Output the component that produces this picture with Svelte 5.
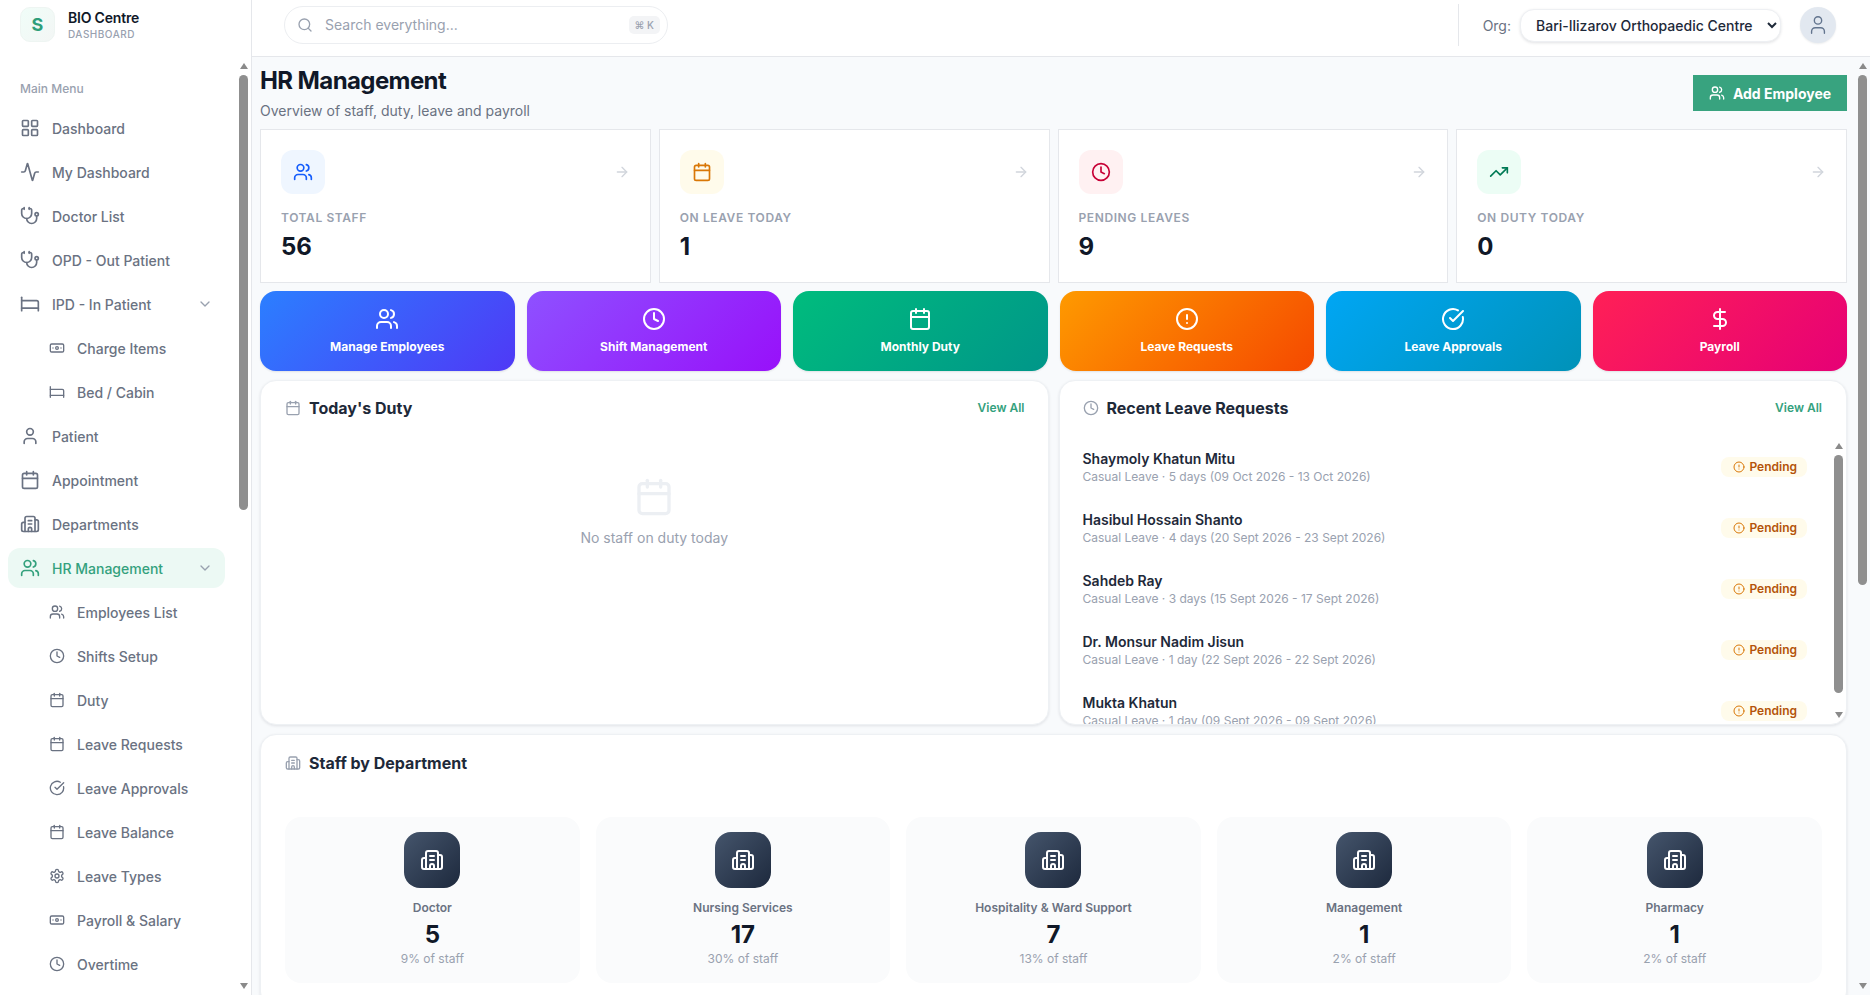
<script>
  const icons = {
    grid: '<rect x="3" y="3" width="7" height="7" rx="1"/><rect x="14" y="3" width="7" height="7" rx="1"/><rect x="14" y="14" width="7" height="7" rx="1"/><rect x="3" y="14" width="7" height="7" rx="1"/>',
    activity: '<path d="M22 12h-2.48a2 2 0 0 0-1.93 1.46l-2.35 8.36a.25.25 0 0 1-.48 0L9.24 2.18a.25.25 0 0 0-.48 0l-2.35 8.36A2 2 0 0 1 4.49 12H2"/>',
    stethoscope: '<path d="M11 2v2"/><path d="M5 2v2"/><path d="M5 3H4a2 2 0 0 0-2 2v4a6 6 0 0 0 12 0V5a2 2 0 0 0-2-2h-1"/><path d="M8 15a6 6 0 0 0 12 0v-3"/><circle cx="20" cy="10" r="2"/>',
    bed: '<path d="M2 4v16"/><path d="M2 8h18a2 2 0 0 1 2 2v10"/><path d="M2 17h20"/>',
    banknote: '<rect x="2" y="6" width="20" height="12" rx="2"/><circle cx="12" cy="12" r="2"/><path d="M6 12h.01M18 12h.01"/>',
    user: '<path d="M19 21v-2a4 4 0 0 0-4-4H9a4 4 0 0 0-4 4v2"/><circle cx="12" cy="7" r="4"/>',
    calendar: '<path d="M8 2v4"/><path d="M16 2v4"/><rect x="3" y="4" width="18" height="18" rx="2"/><path d="M3 10h18"/>',
    building: '<path d="M10 12h4"/><path d="M10 8h4"/><path d="M14 21v-3a2 2 0 0 0-4 0v3"/><path d="M6 10H4a2 2 0 0 0-2 2v7a2 2 0 0 0 2 2h16a2 2 0 0 0 2-2V9a2 2 0 0 0-2-2h-2"/><path d="M6 21V5a2 2 0 0 1 2-2h8a2 2 0 0 1 2 2v16"/>',
    users: '<path d="M16 21v-2a4 4 0 0 0-4-4H6a4 4 0 0 0-4 4v2"/><circle cx="9" cy="7" r="4"/><path d="M22 21v-2a4 4 0 0 0-3-3.87"/><path d="M16 3.13a4 4 0 0 1 0 7.75"/>',
    clock: '<circle cx="12" cy="12" r="10"/><path d="M12 6v6l4 2"/>',
    check: '<path d="M21.801 10A10 10 0 1 1 17 3.335"/><path d="m9 11 3 3L22 4"/>',
    settings: '<path d="M12.22 2h-.44a2 2 0 0 0-2 2v.18a2 2 0 0 1-1 1.73l-.43.25a2 2 0 0 1-2 0l-.15-.08a2 2 0 0 0-2.73.73l-.22.38a2 2 0 0 0 .73 2.73l.15.1a2 2 0 0 1 1 1.72v.51a2 2 0 0 1-1 1.74l-.15.09a2 2 0 0 0-.73 2.73l.22.38a2 2 0 0 0 2.73.73l.15-.08a2 2 0 0 1 2 0l.43.25a2 2 0 0 1 1 1.73V20a2 2 0 0 0 2 2h.44a2 2 0 0 0 2-2v-.18a2 2 0 0 1 1-1.73l.43-.25a2 2 0 0 1 2 0l.15.08a2 2 0 0 0 2.73-.73l.22-.39a2 2 0 0 0-.73-2.73l-.15-.08a2 2 0 0 1-1-1.74v-.5a2 2 0 0 1 1-1.74l.15-.09a2 2 0 0 0 .73-2.73l-.22-.38a2 2 0 0 0-2.73-.73l-.15.08a2 2 0 0 1-2 0l-.43-.25a2 2 0 0 1-1-1.73V4a2 2 0 0 0-2-2z"/><circle cx="12" cy="12" r="3"/>',
    search: '<path d="m21 21-4.34-4.34"/><circle cx="11" cy="11" r="8"/>',
    arrow: '<path d="M5 12h14"/><path d="m12 5 7 7-7 7"/>',
    trending: '<path d="M16 7h6v6"/><path d="m22 7-8.5 8.5-5-5L2 17"/>',
    alert: '<circle cx="12" cy="12" r="10"/><path d="M12 8v4"/><path d="M12 16h.01"/>',
    dollar: '<path d="M12 2v20"/><path d="M17 5H9.5a3.5 3.5 0 0 0 0 7h5a3.5 3.5 0 0 1 0 7H6"/>',
    chevron: '<path d="m6 9 6 6 6-6"/>'
  };

  const menu = [
    { label: 'Dashboard', icon: 'grid' },
    { label: 'My Dashboard', icon: 'activity' },
    { label: 'Doctor List', icon: 'stethoscope' },
    { label: 'OPD - Out Patient', icon: 'stethoscope' },
    { label: 'IPD - In Patient', icon: 'bed', open: true },
    { label: 'Charge Items', icon: 'banknote', sub: true },
    { label: 'Bed / Cabin', icon: 'bed', sub: true },
    { label: 'Patient', icon: 'user' },
    { label: 'Appointment', icon: 'calendar' },
    { label: 'Departments', icon: 'building' },
    { label: 'HR Management', icon: 'users', open: true, active: true },
    { label: 'Employees List', icon: 'users', sub: true },
    { label: 'Shifts Setup', icon: 'clock', sub: true },
    { label: 'Duty', icon: 'calendar', sub: true },
    { label: 'Leave Requests', icon: 'calendar', sub: true },
    { label: 'Leave Approvals', icon: 'check', sub: true },
    { label: 'Leave Balance', icon: 'calendar', sub: true },
    { label: 'Leave Types', icon: 'settings', sub: true },
    { label: 'Payroll & Salary', icon: 'banknote', sub: true },
    { label: 'Overtime', icon: 'clock', sub: true }
  ];

  const stats = [
    { label: 'Total Staff', value: 56, icon: 'users', tone: 'blue' },
    { label: 'On Leave Today', value: 1, icon: 'calendar', tone: 'amber' },
    { label: 'Pending Leaves', value: 9, icon: 'clock', tone: 'rose' },
    { label: 'On Duty Today', value: 0, icon: 'trending', tone: 'green' }
  ];

  const actions = [
    { label: 'Manage Employees', icon: 'users', tone: 'a-blue' },
    { label: 'Shift Management', icon: 'clock', tone: 'a-purple' },
    { label: 'Monthly Duty', icon: 'calendar', tone: 'a-green' },
    { label: 'Leave Requests', icon: 'alert', tone: 'a-orange' },
    { label: 'Leave Approvals', icon: 'check', tone: 'a-sky' },
    { label: 'Payroll', icon: 'dollar', tone: 'a-pink' }
  ];

  const leaves = [
    { name: 'Shaymoly Khatun Mitu', detail: 'Casual Leave · 5 days (09 Oct 2026 - 13 Oct 2026)' },
    { name: 'Hasibul Hossain Shanto', detail: 'Casual Leave · 4 days (20 Sept 2026 - 23 Sept 2026)' },
    { name: 'Sahdeb Ray', detail: 'Casual Leave · 3 days (15 Sept 2026 - 17 Sept 2026)' },
    { name: 'Dr. Monsur Nadim Jisun', detail: 'Casual Leave · 1 day (22 Sept 2026 - 22 Sept 2026)' },
    { name: 'Mukta Khatun', detail: 'Casual Leave · 1 day (09 Sept 2026 - 09 Sept 2026)' }
  ];

  const departments = [
    { name: 'Doctor', count: 5, share: '9% of staff' },
    { name: 'Nursing Services', count: 17, share: '30% of staff' },
    { name: 'Hospitality & Ward Support', count: 7, share: '13% of staff' },
    { name: 'Management', count: 1, share: '2% of staff' },
    { name: 'Pharmacy', count: 1, share: '2% of staff' }
  ];
</script>

{#snippet icon(name, size = 20, sw = 2)}
  <svg class="ico" width={size} height={size} viewBox="0 0 24 24" fill="none" stroke="currentColor" stroke-width={sw} stroke-linecap="round" stroke-linejoin="round">{@html icons[name]}</svg>
{/snippet}

{#snippet scrollbar(thumbHeight)}
  <div class="sbar">
    <span class="sb-up"></span>
    <span class="sb-thumb" style="height: {thumbHeight}px"></span>
    <span class="sb-down"></span>
  </div>
{/snippet}

<div class="app">
  <aside class="sidebar">
    <div class="brand">
      <div class="logo">S</div>
      <div class="brand-text">
        <div class="brand-name">BIO Centre</div>
        <div class="brand-sub">DASHBOARD</div>
      </div>
    </div>
    <div class="nav-wrap">
      <nav class="nav">
        <div class="nav-title">Main Menu</div>
        <div class="nav-list">
          {#each menu as item}
            <div class="nav-row" class:sub={item.sub} class:active={item.active}>
              {@render icon(item.icon, item.sub ? 16 : 20)}
              <span class="nav-label">{item.label}</span>
              {#if item.open}
                <span class="nav-chev">{@render icon('chevron', 16)}</span>
              {/if}
            </div>
          {/each}
        </div>
      </nav>
      {@render scrollbar(435)}
    </div>
  </aside>

  <div class="main">
    <header class="topbar">
      <div class="search">
        <span class="search-ico">{@render icon('search', 16)}</span>
        <span class="search-text">Search everything...</span>
        <span class="kbd">⌘ K</span>
      </div>
      <div class="top-right">
        <label class="org-label" for="org">Org:</label>
        <select id="org" class="org">
          <option>Bari-Ilizarov Orthopaedic Centre</option>
        </select>
        <div class="avatar">{@render icon('user', 22, 1.5)}</div>
      </div>
    </header>

    <div class="content">
      <div class="page">
        <div class="page-head">
          <div>
            <h1>HR Management</h1>
            <p>Overview of staff, duty, leave and payroll</p>
          </div>
          <button class="add-btn">{@render icon('users', 16)}Add Employee</button>
        </div>

        <div class="stats">
          {#each stats as s}
            <div class="stat">
              <div class="stat-top">
                <div class="stat-ico {s.tone}">{@render icon(s.icon, 20)}</div>
                <span class="stat-arrow">{@render icon('arrow', 16)}</span>
              </div>
              <div class="stat-label">{s.label}</div>
              <div class="stat-value">{s.value}</div>
            </div>
          {/each}
        </div>

        <div class="actions">
          {#each actions as a}
            <div class="action {a.tone}">
              {@render icon(a.icon, 24)}
              <span>{a.label}</span>
            </div>
          {/each}
        </div>

        <div class="panels">
          <section class="panel">
            <div class="panel-head duty-head">
              <span class="panel-ico">{@render icon('calendar', 16)}</span>
              <h2>Today's Duty</h2>
              <span class="view-all">View All</span>
            </div>
            <div class="empty">
              {@render icon('calendar', 40)}
              <div>No staff on duty today</div>
            </div>
          </section>

          <section class="panel">
            <div class="panel-head leave-head">
              <span class="panel-ico">{@render icon('clock', 16)}</span>
              <h2>Recent Leave Requests</h2>
              <span class="view-all">View All</span>
            </div>
            <div class="leave-wrap">
              <div class="leave-list">
                {#each leaves as l}
                  <div class="leave">
                    <div class="leave-text">
                      <div class="leave-name">{l.name}</div>
                      <div class="leave-detail">{l.detail}</div>
                    </div>
                    <span class="badge">{@render icon('alert', 12)}Pending</span>
                  </div>
                {/each}
              </div>
              {@render scrollbar(238)}
            </div>
          </section>
        </div>

        <section class="panel dept-panel">
          <div class="panel-head">
            <span class="panel-ico">{@render icon('building', 16)}</span>
            <h2>Staff by Department</h2>
          </div>
          <div class="depts">
            {#each departments as d}
              <div class="dept">
                <div class="dept-ico">{@render icon('building', 24)}</div>
                <div class="dept-name">{d.name}</div>
                <div class="dept-count">{d.count}</div>
                <div class="dept-share">{d.share}</div>
              </div>
            {/each}
          </div>
        </section>
      </div>
      {@render scrollbar(510)}
    </div>
  </div>
</div>

<style>
  :global(body) {
    margin: 0;
    font-family: Inter, "Liberation Sans", sans-serif;
    color: #101828;
    overflow: hidden;
  }
  .app { display: flex; height: 100vh; background: #f8fafc; }
  .ico { display: block; flex-shrink: 0; }

  /* drawn scrollbars, the page itself does not scroll here */
  .sbar {
    position: absolute;
    top: 0;
    right: 0;
    bottom: 0;
    width: 15px;
    display: flex;
    flex-direction: column;
    align-items: center;
    padding: 6px 0;
    box-sizing: border-box;
  }
  .sb-up { border-left: 4.5px solid transparent; border-right: 4.5px solid transparent; border-bottom: 6px solid #8a8a8a; }
  .sb-down { margin-top: auto; border-left: 4.5px solid transparent; border-right: 4.5px solid transparent; border-top: 6px solid #8a8a8a; }
  .sb-thumb { width: 9px; margin-top: 6px; background: #8f8f8f; border-radius: 5px; }

  /* sidebar */
  .sidebar {
    width: 252px;
    flex-shrink: 0;
    display: flex;
    flex-direction: column;
    background: #fff;
    border-right: 1px solid #e5e7eb;
    box-sizing: border-box;
  }
  .brand { height: 57px; flex-shrink: 0; display: flex; align-items: flex-start; gap: 13px; padding: 7px 0 0 20px; box-sizing: border-box; }
  .logo {
    width: 35px;
    height: 35px;
    border-radius: 10px;
    background: linear-gradient(135deg, #f0fdf8, #f3f6f5);
    border: 1px solid #eef5f2;
    box-sizing: border-box;
    display: flex;
    align-items: center;
    justify-content: center;
    color: #2f9e7a;
    font-size: 18px;
    font-weight: 700;
  }
  .brand-text { padding-top: 1.5px; }
  .brand-name { font-size: 14px; font-weight: 600; line-height: 18px; letter-spacing: -0.2px; color: #101828; }
  .brand-sub { font-size: 10px; font-weight: 500; line-height: 14px; letter-spacing: 0.5px; color: #99a1af; }
  .nav-wrap { position: relative; flex: 1; min-height: 0; }
  .nav { height: 100%; overflow: hidden; padding: 24px 15px 0 8px; box-sizing: border-box; }
  .nav-title { font-size: 12px; font-weight: 500; line-height: 16px; color: #99a1af; padding-left: 12px; margin-bottom: 11px; }
  .nav-list { display: flex; flex-direction: column; gap: 4px; width: 217px; }
  .nav-row {
    height: 40px;
    display: flex;
    align-items: center;
    gap: 12px;
    padding: 0 12px;
    border-radius: 12px;
    font-size: 14px;
    font-weight: 500;
    color: #6a7282;
    box-sizing: border-box;
  }
  .nav-row.sub { padding-left: 41px; }
  .nav-row.active { background: #ecf9f4; color: #34a17d; }
  .nav-label { flex: 1; white-space: nowrap; }
  .nav-chev { color: #99a1af; }

  /* topbar */
  .main { flex: 1; min-width: 0; display: flex; flex-direction: column; }
  .topbar {
    height: 57px;
    flex-shrink: 0;
    display: flex;
    align-items: flex-start;
    justify-content: space-between;
    box-sizing: border-box;
    background: #fff;
    border-bottom: 1px solid #e5e7eb;
    padding: 6px 34px 0 32px;
  }
  .search {
    width: 384px;
    height: 38px;
    box-sizing: border-box;
    display: flex;
    align-items: center;
    gap: 12px;
    padding: 0 7px 0 12px;
    border: 1px solid #eceef1;
    border-radius: 19px;
    background: #fff;
  }
  .search-ico { color: #99a1af; }
  .search-text { flex: 1; font-size: 14px; color: #99a1af; margin-top: -1px; }
  .kbd {
    font-size: 10px;
    font-weight: 500;
    color: #99a1af;
    background: #f3f4f6;
    border-radius: 5px;
    padding: 3px 6px;
  }
  .top-right { display: flex; align-items: center; height: 42px; margin-top: -2px; border-left: 1px solid #e5e7eb; padding-left: 24px; }
  .org-label { font-size: 14px; color: #6a7282; margin-right: 9px; }
  .org {
    width: 261px;
    height: 33px;
    padding: 0 4px 0 11px;
    border: 1px solid #eef0f3;
    border-radius: 14px;
    background: #fff;
    box-shadow: 0 1px 3px rgba(16, 24, 40, 0.12);
    font-family: inherit;
    font-size: 14px;
    font-weight: 500;
    color: #1e2939;
    margin-right: 19px;
  }
  .avatar {
    width: 36px;
    height: 36px;
    border-radius: 50%;
    background: #e2e8f0;
    color: #62748e;
    display: flex;
    align-items: center;
    justify-content: center;
    box-shadow: 0 1px 2px rgba(16, 24, 40, 0.08);
  }

  /* page */
  .content { position: relative; flex: 1; min-height: 0; overflow: hidden; background: #f8fafc; }
  .page { padding: 8px 23px 8px 8px; box-sizing: border-box; }
  .page-head { display: flex; align-items: center; justify-content: space-between; }
  h1 { margin: 0; font-size: 24px; font-weight: 700; line-height: 32px; letter-spacing: -0.6px; color: #101828; }
  .page-head p { margin: 4px 0 0; font-size: 14px; line-height: 20px; color: #6a7282; }
  .add-btn {
    height: 36px;
    width: 154px;
    display: flex;
    align-items: center;
    justify-content: center;
    gap: 8px;
    border: 0;
    background: #38a37f;
    color: #fff;
    font-family: inherit;
    font-size: 14px;
    font-weight: 700;
    padding: 0;
  }

  .stats { display: grid; grid-template-columns: repeat(4, 1fr); gap: 8px; margin-top: 8px; }
  .stat { background: #fff; border: 1px solid #e5e7eb; padding: 20px; height: 154px; box-sizing: border-box; }
  .stat-top { display: flex; align-items: center; justify-content: space-between; }
  .stat-ico { width: 44px; height: 44px; border-radius: 12px; display: flex; align-items: center; justify-content: center; }
  .stat-ico.blue { background: #eff6ff; color: #155dfc; }
  .stat-ico.amber { background: #fffbeb; color: #d97706; }
  .stat-ico.rose { background: #fff1f2; color: #c70036; }
  .stat-ico.green { background: #ecfdf5; color: #007a55; }
  .stat-arrow { color: #d1d5dc; }
  .stat-label { margin-top: 15px; font-size: 12px; font-weight: 600; line-height: 18px; letter-spacing: 0.6px; text-transform: uppercase; color: #99a1af; }
  .stat-value { margin-top: 4px; font-size: 24px; font-weight: 700; line-height: 32px; color: #101828; }

  .actions { display: grid; grid-template-columns: repeat(6, 1fr); gap: 12px; margin-top: 8px; }
  .action {
    height: 80px;
    border-radius: 16px;
    color: #fff;
    display: flex;
    flex-direction: column;
    align-items: center;
    padding-top: 16px;
    box-sizing: border-box;
    font-size: 12px;
    font-weight: 700;
    line-height: 16px;
    gap: 8px;
    box-shadow: 0 1px 2px rgba(16, 24, 40, 0.1);
  }
  .a-blue { background: linear-gradient(135deg, #2b7fff, #4f39f6); }
  .a-purple { background: linear-gradient(135deg, #8e51ff, #9810fa); }
  .a-green { background: linear-gradient(135deg, #00bc7d, #009689); }
  .a-orange { background: linear-gradient(135deg, #fe9a00, #f54900); }
  .a-sky { background: linear-gradient(135deg, #00a6f4, #0092b8); }
  .a-pink { background: linear-gradient(135deg, #ff2056, #e60076); }

  .panels { display: grid; grid-template-columns: 1fr 1fr; gap: 10px; margin-top: 9px; }
  .panel {
    background: #fff;
    border-radius: 16px;
    border: 1px solid #eef1f4;
    box-shadow: 0 1px 3px rgba(16, 24, 40, 0.1);
    overflow: hidden;
    box-sizing: border-box;
    height: 345px;
    display: flex;
    flex-direction: column;
  }
  .panel-head { display: flex; align-items: center; gap: 8px; height: 54px; flex-shrink: 0; padding: 0 24px; }
  .duty-head { padding-right: 23px; }
  .leave-head { padding-left: 23px; }
  .panel-ico { color: #99a1af; }
  h2 { margin: 0; font-size: 16px; font-weight: 700; color: #1e2939; flex: 1; }
  .view-all { font-size: 12px; font-weight: 600; color: #34a17d; margin-top: -2px; }

  .empty { display: flex; flex-direction: column; align-items: center; gap: 12px; padding-top: 42px; font-size: 14px; color: #99a1af; }
  .empty :global(svg) { color: #eceff3; }

  .leave-wrap { position: relative; flex: 1; min-height: 0; margin-top: 2px; }
  .leave-list { height: 100%; overflow: hidden; padding-right: 15px; box-sizing: border-box; }
  .leave { height: 61px; box-sizing: border-box; display: flex; align-items: center; justify-content: space-between; padding: 0 24px 0 23px; }
  .leave-name { font-size: 14px; font-weight: 600; line-height: 18px; color: #1e2939; }
  .leave-detail { font-size: 12px; line-height: 18px; color: #99a1af; }
  .badge {
    display: inline-flex;
    align-items: center;
    gap: 4px;
    padding: 2px 10px 2px 12px;
    margin-bottom: 2px;
    border-radius: 8px;
    background: #fffbeb;
    color: #b45309;
    font-size: 12px;
    font-weight: 600;
    line-height: 16px;
  }
  .badge :global(svg) { color: #d97706; }

  .dept-panel { margin-top: 9px; height: auto; }
  .dept-panel .panel-head { height: 56px; }
  .depts { display: grid; grid-template-columns: repeat(5, 1fr); gap: 16px; padding: 26px 24px 24px; }
  .dept { background: #fafbfc; border-radius: 16px; padding: 15px 16px 16px; height: 166px; box-sizing: border-box; text-align: center; }
  .dept-ico {
    width: 56px;
    height: 56px;
    margin: 0 auto;
    border-radius: 16px;
    background: linear-gradient(135deg, #45556c, #1d293d);
    color: #fff;
    display: flex;
    align-items: center;
    justify-content: center;
  }
  .dept-name { margin-top: 12px; font-size: 12px; font-weight: 600; line-height: 16px; color: #6a7282; }
  .dept-count { margin-top: 3px; font-size: 24px; font-weight: 700; line-height: 32px; color: #101828; }
  .dept-share { margin-top: 0; font-size: 12px; line-height: 16px; color: #99a1af; }
</style>
